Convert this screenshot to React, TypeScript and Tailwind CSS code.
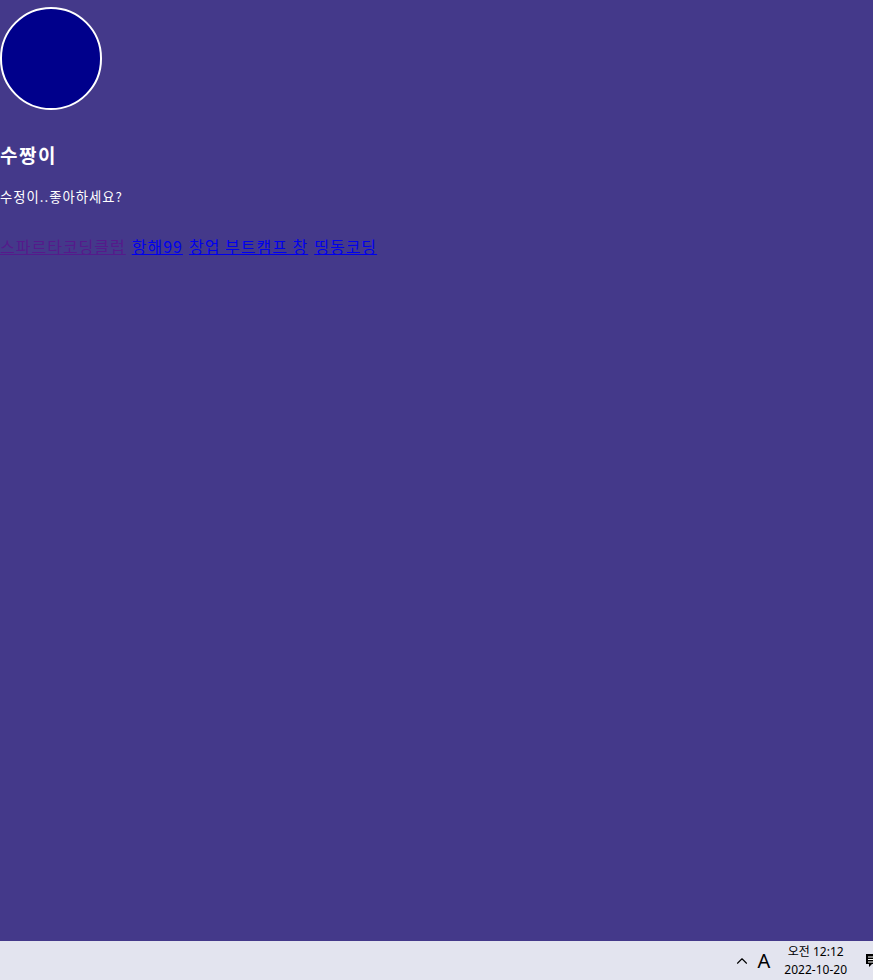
import { ChevronUp } from 'lucide-react';

const links = [
  { label: '스파르타코딩클럽', visited: true },
  { label: '항해99', visited: false },
  { label: '창업 부트캠프 창', visited: false },
  { label: '띵동코딩', visited: false },
];

function Taskbar() {
  return (
    <div className="h-[39px] shrink-0 bg-[#e3e4ef] flex items-center justify-end text-black">
      <ChevronUp className="w-[18px] h-[18px] mr-[7px]" strokeWidth={1.5} />
      <span className="text-[20px] leading-none mr-[14px] font-['Noto_Sans',sans-serif]">A</span>
      <div className="flex flex-col items-center text-[12px] leading-[18px] mr-[19px] font-['Noto_Sans','Noto_Sans_CJK_KR',sans-serif]">
        <span>오전 12:12</span>
        <span>2022-10-20</span>
      </div>
      {/* notification glyph, cut by the window edge */}
      <svg viewBox="0 0 12 14" className="w-[12px] h-[14px] -mr-[5px]" aria-hidden="true">
        <path d="M0 0 H12 V10 H6 L3 13 V10 H0 Z" fill="#000" />
        <path d="M2 3 H9 M2 5.5 H9 M2 8 H7" stroke="#fff" strokeWidth="1.2" />
      </svg>
    </div>
  );
}

export default function App() {
  return (
    <div className="h-[980px] flex flex-col bg-[#44398a] font-['Noto_Sans_CJK_KR','Noto_Sans',sans-serif] overflow-hidden">
      <div className="flex-1 flex flex-col items-start">
        {/* profile image */}
        <div className="mt-[7px] w-[102px] h-[103px] rounded-full bg-[#00008b] border-2 border-white" />

        <h3 className="mt-[31px] text-[19px] leading-[28px] font-bold tracking-[1.5px] text-white">수짱이</h3>
        <p className="mt-[18px] text-[13.33px] leading-[20px] tracking-[1px] text-white">수정이..좋아하세요?</p>

        <div className="mt-[27px] text-[16px] leading-[24px] tracking-[1px] flex gap-[6px]">
          {links.map((l) => (
            <a
              key={l.label}
              href="#"
              className={l.visited ? 'underline text-[#551a8b]' : 'underline text-[#0000ee]'}
            >
              {l.label}
            </a>
          ))}
        </div>
      </div>
      <Taskbar />
    </div>
  );
}
